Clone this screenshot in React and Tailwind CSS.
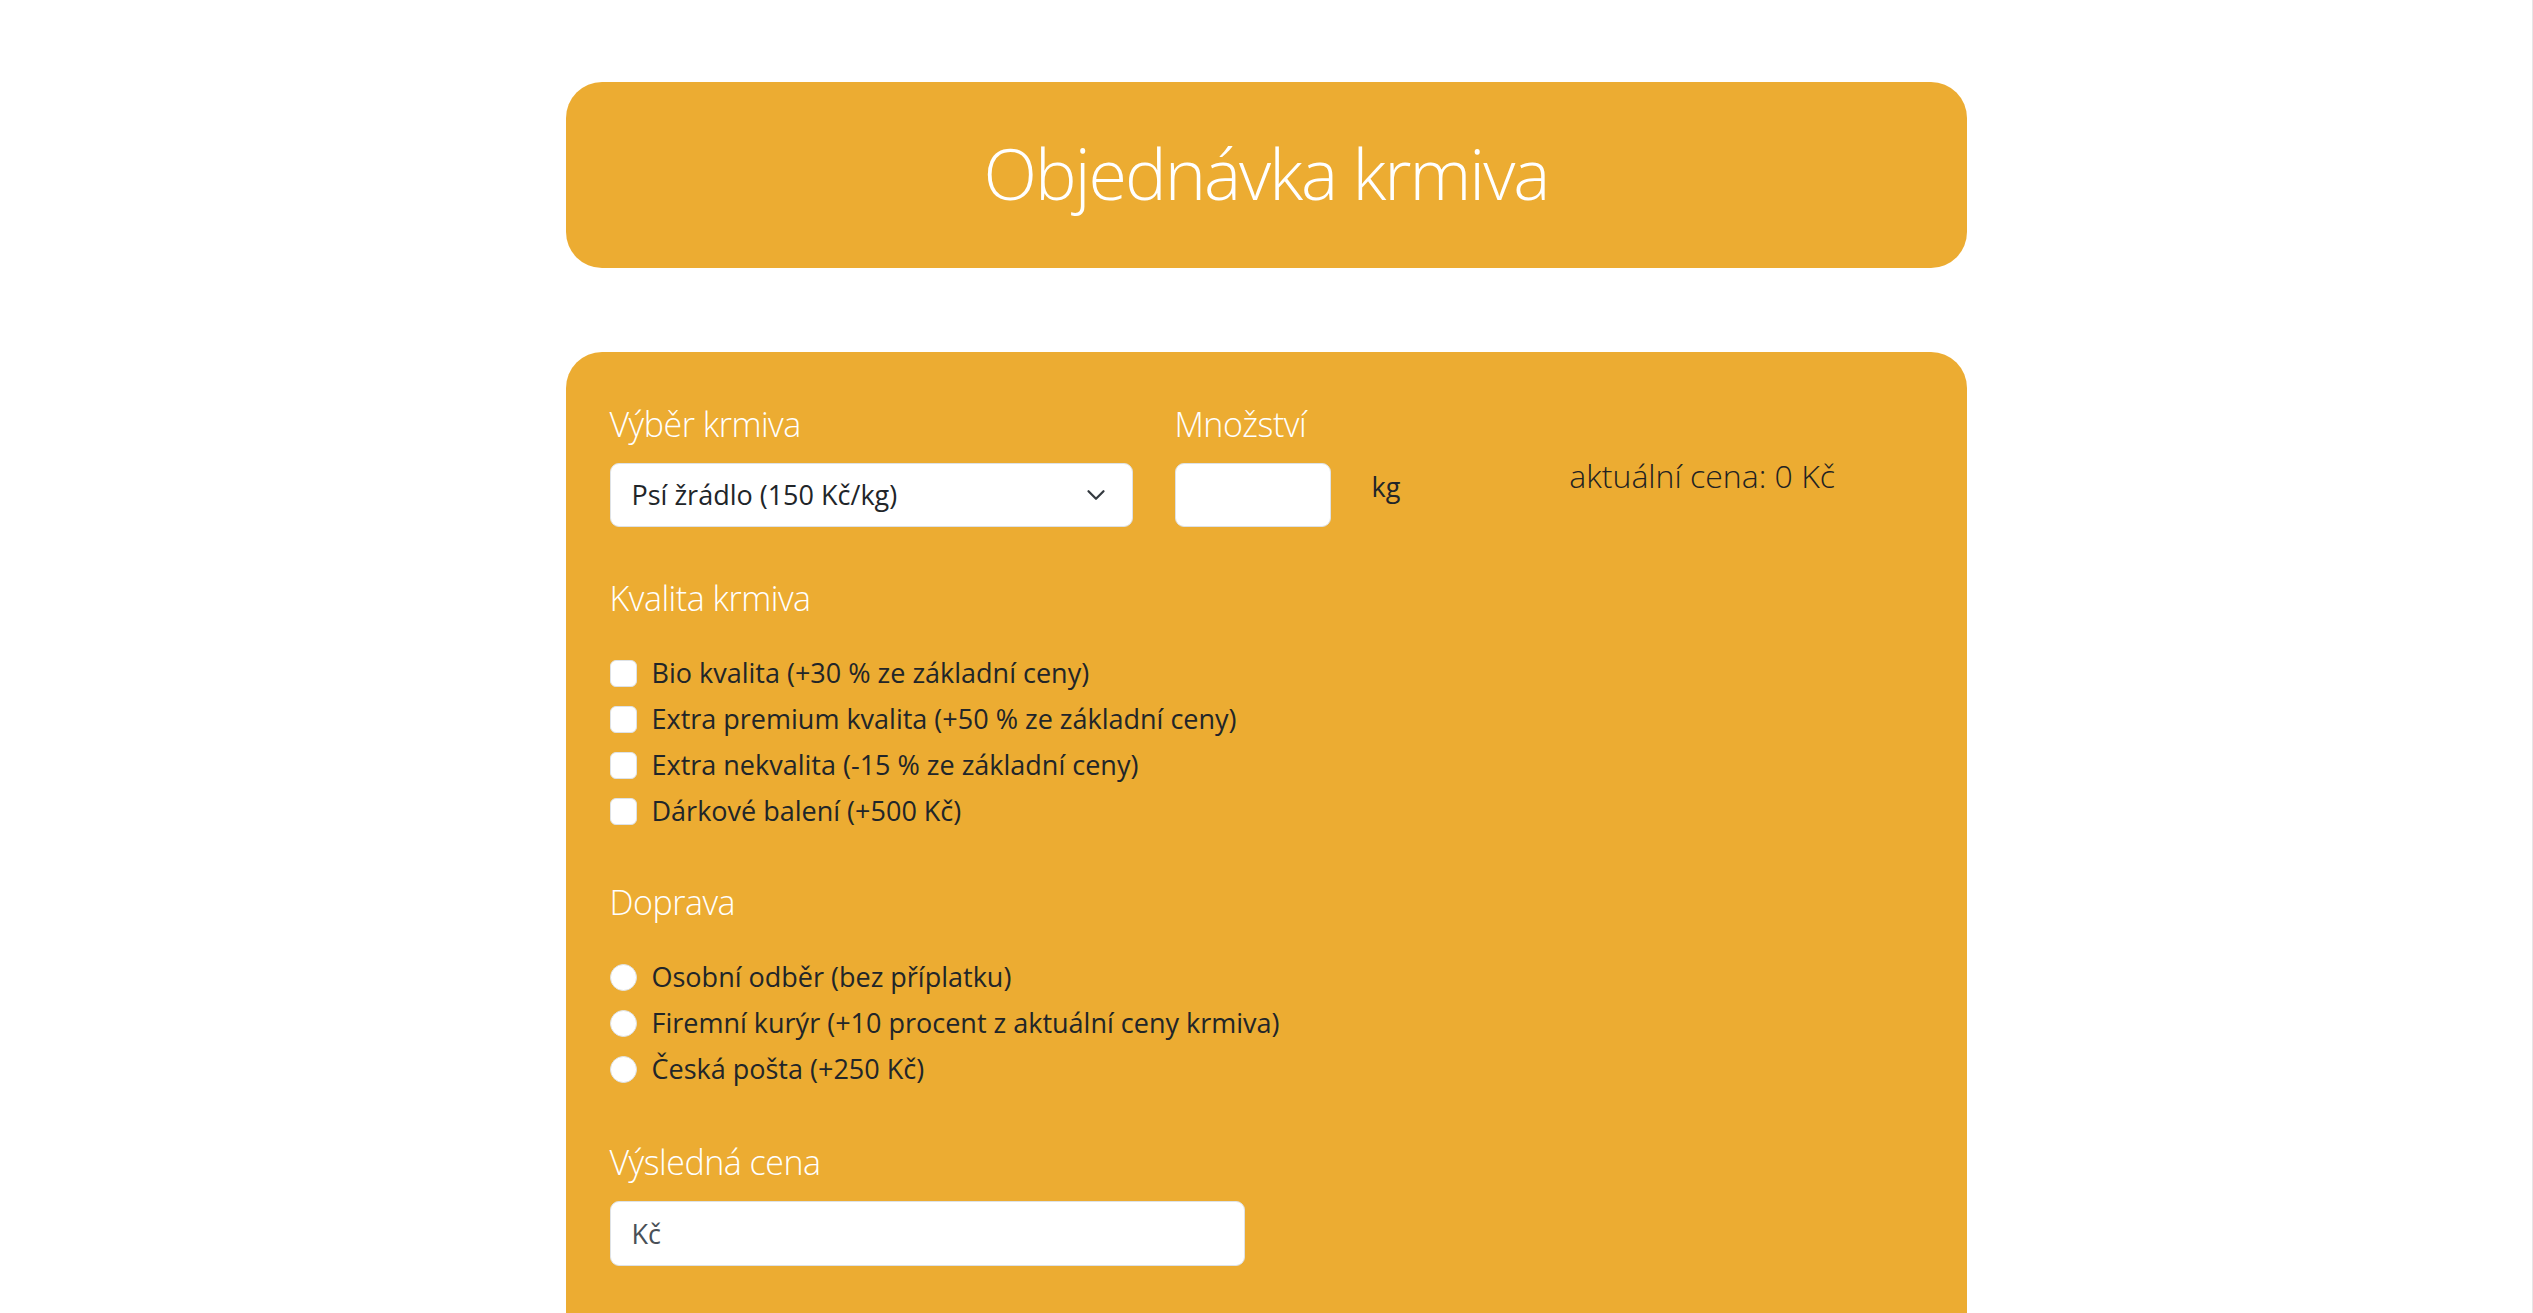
import React from "react";

const quality = [
  "Bio kvalita (+30 % ze základní ceny)",
  "Extra premium kvalita (+50 % ze základní ceny)",
  "Extra nekvalita (-15 % ze základní ceny)",
  "Dárkové balení (+500 Kč)",
];

const shipping = [
  "Osobní odběr (bez příplatku)",
  "Firemní kurýr (+10 procent z aktuální ceny krmiva)",
  "Česká pošta (+250 Kč)",
];

function Heading({ children, className = "" }) {
  return (
    <h4 className={"text-[34px] leading-[44px] tracking-[-0.5px] font-light text-white " + className}>
      {children}
    </h4>
  );
}

export default function App() {
  return (
    <div className="min-h-screen bg-white border-r border-[#e6e6e6] font-['Open_Sans',sans-serif] text-[#212529]">
      <div className="w-[1401px] mx-auto pt-[82px]">
        {/* title */}
        <div className="h-[186px] rounded-[36px] bg-[#ecac32] flex items-center justify-center">
          <h1 className="text-[70px] tracking-[-2px] font-light text-white leading-none mb-[4px]">Objednávka krmiva</h1>
        </div>

        {/* form */}
        <form className="mt-[84px] rounded-t-[36px] bg-[#ecac32] px-[44px] pt-[50px] pb-[80px]">
          <div className="flex items-start">
            <div className="w-[523px]">
              <Heading>Výběr krmiva</Heading>
              <div className="relative mt-[17px]">
                <select className="appearance-none w-full h-[64px] rounded-[9px] bg-white border border-[#dee2e6] pl-[21px] pr-[60px] text-[27px] text-[#212529] outline-none">
                  <option>Psí žrádlo (150 Kč/kg)</option>
                  <option>Kočičí žrádlo (120 Kč/kg)</option>
                </select>
                <svg
                  className="absolute right-[25px] top-[20px] pointer-events-none"
                  width="24"
                  height="24"
                  viewBox="0 0 16 16"
                  fill="none"
                  stroke="#343a40"
                  strokeWidth="1.5"
                  strokeLinecap="round"
                  strokeLinejoin="round"
                >
                  <path d="M3 5.5l5 5 5-5" />
                </svg>
              </div>
            </div>
            <div className="ml-[42px] w-[156px]">
              <Heading>Množství</Heading>
              <input
                type="text"
                className="mt-[17px] w-full h-[64px] rounded-[9px] bg-white border border-[#dee2e6] px-[18px] text-[27px] outline-none"
              />
            </div>
            <div className="ml-[41px] pt-[67px] text-[27px] leading-[36px]">kg</div>
            <div className="ml-[169px] pt-[52px] text-[32px] leading-[44px] font-light text-[#222]">
              aktuální cena: 0 Kč
            </div>
          </div>

          <Heading className="mt-[49px]">Kvalita krmiva</Heading>
          <div className="mt-[30px] flex flex-col">
            {quality.map((q) => (
              <label key={q} className="h-[46px] flex items-center gap-[15px] text-[27px]">
                <input
                  type="checkbox"
                  className="appearance-none w-[27px] h-[27px] rounded-[6px] bg-white border border-[#dee2e6] shrink-0"
                />
                <span>{q}</span>
              </label>
            ))}
          </div>

          <Heading className="mt-[46px]">Doprava</Heading>
          <div className="mt-[30px] flex flex-col">
            {shipping.map((s) => (
              <label key={s} className="h-[46px] flex items-center gap-[15px] text-[27px]">
                <input
                  type="radio"
                  name="doprava"
                  className="appearance-none w-[27px] h-[27px] rounded-full bg-white border border-[#dee2e6] shrink-0"
                />
                <span>{s}</span>
              </label>
            ))}
          </div>

          <Heading className="mt-[48px]">Výsledná cena</Heading>
          <input
            type="text"
            readOnly
            value="Kč"
            className="mt-[17px] block w-[635px] h-[65px] rounded-[9px] bg-white border border-[#dee2e6] px-[21px] text-[27px] text-[#495057] outline-none"
          />
        </form>
      </div>
    </div>
  );
}
